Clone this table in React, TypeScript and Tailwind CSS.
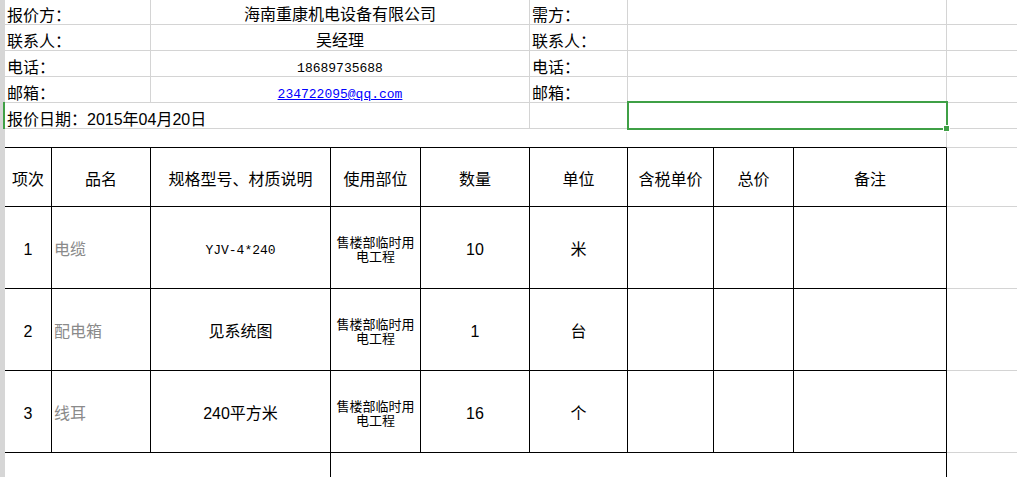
import React from 'react'

const font = "font-['Liberation_Sans','Noto_Sans_CJK_SC',sans-serif]"
const mono = "font-['Liberation_Mono','Noto_Sans_CJK_SC',monospace]"

// top info block rows: [left label, merged value, right label]
const infoRows: { label: string; value: React.ReactNode; right: string }[] = [
  { label: '报价方：', value: '海南重康机电设备有限公司', right: '需方：' },
  { label: '联系人：', value: '吴经理', right: '联系人：' },
  { label: '电话：', value: <span className={`${mono} text-[13px]`}>18689735688</span>, right: '电话：' },
  {
    label: '邮箱：',
    value: <span className={`${mono} text-[13px] text-[#0000ff] underline`}>234722095@qq.com</span>,
    right: '邮箱：',
  },
]

const items = [
  { no: '1', name: '电缆', spec: <span className={`${mono} text-[13px]`}>YJV-4*240</span>, qty: '10', unit: '米' },
  { no: '2', name: '配电箱', spec: '见系统图', qty: '1', unit: '台' },
  { no: '3', name: '线耳', spec: '240平方米', qty: '16', unit: '个' },
]

const headers = ['项次', '品名', '规格型号、材质说明', '使用部位', '数量', '单位', '含税单价', '总价', '备注']

const topCols = 'grid-cols-[146px_379px_98px_319px_1fr]'
const tableCols = 'grid-cols-[47px_99px_180px_90px_109px_98px_86px_80px_153px_1fr]'

function RowStrip() {
  // cropped row headers at the very left of the sheet
  return (
    <div className="w-[5px] shrink-0 flex flex-col">
      <div className="h-[102px] shrink-0 bg-[#d6d6d6]" />
      <div className="h-[27px] shrink-0 bg-[#d6d6d6] border-r-2 border-[#3fa046]" />
      <div className="flex-1 bg-[#d6d6d6]" />
    </div>
  )
}

export default function App() {
  return (
    <div className={`${font} flex w-[1017px] h-[477px] overflow-hidden bg-white text-black text-[16px]`}>
      <RowStrip />
      <div className="flex-1 flex flex-col">
        {/* info block */}
        {infoRows.map((r, i) => (
          <div key={i} className={`grid shrink-0 ${topCols} ${i === 0 ? 'h-[25px]' : 'h-[26px]'}`}>
            <div className="border-r border-b border-[#d4d4d4] flex items-end pl-[2px] leading-none">{r.label}</div>
            <div className="border-r border-b border-[#d4d4d4] flex items-end justify-center leading-none pb-[1px]">{r.value}</div>
            <div className="border-r border-b border-[#d4d4d4] flex items-end pl-[2px] leading-none">{r.right}</div>
            <div className="border-r border-b border-[#d4d4d4]" />
            <div className="border-b border-[#d4d4d4]" />
          </div>
        ))}
        <div className={`grid shrink-0 ${topCols} h-[26px]`}>
          <div className="col-span-2 border-r border-b border-[#d4d4d4] flex items-end pl-[2px] leading-none whitespace-nowrap">
            报价日期：2015年04月20日
          </div>
          <div className="border-r border-b border-[#d4d4d4]" />
          <div className="relative border-r border-b border-[#d4d4d4]">
            {/* selected cell */}
            <div className="absolute left-[-1px] top-[-2px] right-[-2px] bottom-[-2px] border-2 border-[#3fa046]" />
            <div className="absolute right-[-4px] bottom-[-4px] w-[7px] h-[7px] bg-[#3fa046] border border-white" />
          </div>
          <div className="border-b border-[#d4d4d4]" />
        </div>
        <div className={`grid shrink-0 ${topCols} h-[19px]`}>
          <div className="col-span-4 border-r border-r-[#d4d4d4] border-b border-b-black" />
          <div className="border-b border-[#d4d4d4]" />
        </div>

        {/* quotation table */}
        <div className={`grid shrink-0 ${tableCols} h-[59px]`}>
          {headers.map((h) => (
            <div key={h} className="border-r border-b border-black flex items-center justify-center pt-[5px] leading-none whitespace-nowrap">
              {h}
            </div>
          ))}
          <div className="border-b border-[#d4d4d4]" />
        </div>
        {items.map((it) => (
          <div key={it.no} className={`grid shrink-0 ${tableCols} h-[82px]`}>
            <div className="border-r border-b border-black flex items-center justify-center pt-[5px] leading-none">{it.no}</div>
            <div className="border-r border-b border-black flex items-center pl-[2px] pt-[5px] leading-none text-[#8a8a8a]">{it.name}</div>
            <div className="border-r border-b border-black flex items-center justify-center pt-[5px] leading-none">{it.spec}</div>
            <div className="border-r border-b border-black flex flex-col items-center justify-center pt-[5px] text-[13px] leading-[14px]">
              <span>售楼部临时用</span>
              <span>电工程</span>
            </div>
            <div className="border-r border-b border-black flex items-center justify-center pt-[5px] leading-none">{it.qty}</div>
            <div className="border-r border-b border-black flex items-center justify-center pt-[5px] leading-none">{it.unit}</div>
            <div className="border-r border-b border-black" />
            <div className="border-r border-b border-black" />
            <div className="border-r border-b border-black" />
            <div className="border-b border-[#d4d4d4]" />
          </div>
        ))}
        <div className={`grid shrink-0 ${tableCols} h-[40px]`}>
          <div className="col-span-3 border-r border-black" />
          <div className="col-span-6 border-r border-black" />
          <div />
        </div>
      </div>
    </div>
  )
}
